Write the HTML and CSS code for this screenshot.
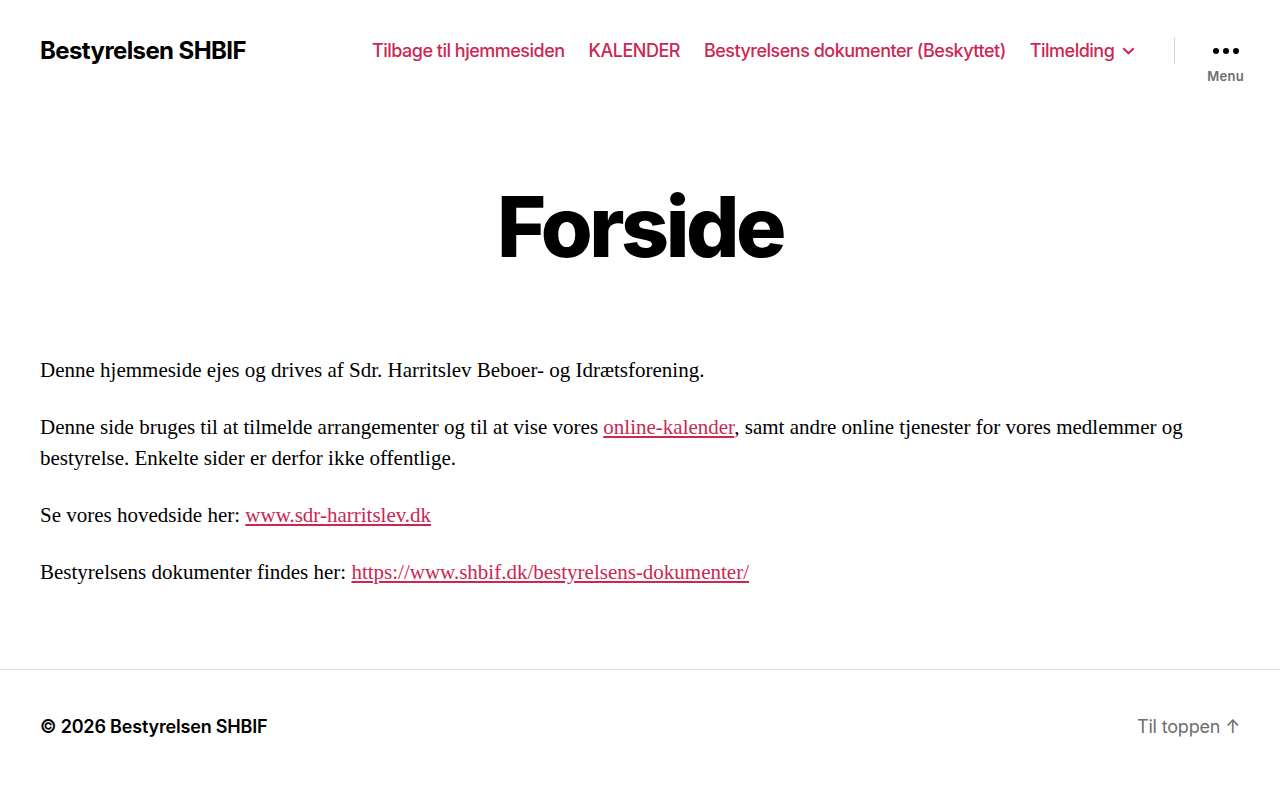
FILE: index.html
```html
<!DOCTYPE html>
<html lang="da">
<head>
  <meta charset="UTF-8" />
  <meta name="viewport" content="width=device-width, initial-scale=1.0" />
  <title>Forside – Bestyrelsen SHBIF</title>
  <link rel="stylesheet" href="styles.css">
</head>
<body>
  <header class="site-header">
    <a class="site-title" href="#">Bestyrelsen SHBIF</a>

    <div class="header-right">
      <nav class="primary-menu">
        <a href="#">Tilbage til hjemmesiden</a>
        <a href="#">KALENDER</a>
        <a href="#">Bestyrelsens dokumenter (Beskyttet)</a>
        <a href="#" class="has-sub">Tilmelding
          <svg class="chevron" width="13" height="8" viewBox="0 0 13 8" aria-hidden="true">
            <polyline points="1.2,1.2 6.5,6.3 11.8,1.2" fill="none" stroke="currentColor" stroke-width="2" />
          </svg>
        </a>
      </nav>

      <div class="separator"></div>

      <button class="menu-toggle" type="button">
        <span class="dots"><i></i><i></i><i></i></span>
        <span class="toggle-text">Menu</span>
      </button>
    </div>
  </header>

  <main class="site-main">
    <h1 class="entry-title">Forside</h1>

    <div class="entry-content">
      <p>Denne hjemmeside ejes og drives af Sdr. Harritslev Beboer- og Idrætsforening.</p>
      <p>Denne side bruges til at tilmelde arrangementer og til at vise vores <a href="#">online-kalender</a>, samt andre online tjenester for vores medlemmer og bestyrelse. Enkelte sider er derfor ikke offentlige.</p>
      <p>Se vores hovedside her: <a href="#">www.sdr-harritslev.dk</a></p>
      <p>Bestyrelsens dokumenter findes her: <a href="#">https://www.shbif.dk/bestyrelsens-dokumenter/</a></p>
    </div>
  </main>

  <footer class="site-footer">
    <p class="copyright">© 2026 <a href="#">Bestyrelsen SHBIF</a></p>
    <a class="to-the-top" href="#">Til toppen <span class="arrow">↑</span></a>
  </footer>
</body>
</html>
```

FILE: styles.css
```css
body {
  margin: 0;
  padding: 0;
  background: #fff;
  color: #000;
  font-family: Inter, "Noto Sans", sans-serif;
}

a {
  color: #cd2653;
}

.site-header {
  display: flex;
  align-items: center;
  justify-content: space-between;
  height: 100px;
  padding: 0 40px;
}

.site-title {
  color: #000;
  text-decoration: none;
  font-size: 24px;
  font-weight: 700;
  letter-spacing: -0.025em;
}

.header-right {
  display: flex;
  align-items: center;
}

.primary-menu {
  display: flex;
  align-items: center;
  gap: 24px;
}

.primary-menu a {
  color: #cd2653;
  text-decoration: none;
  font-size: 18px;
  font-weight: 500;
  letter-spacing: -0.0277em;
  display: flex;
  align-items: center;
}

.chevron {
  margin-left: 8px;
  margin-top: 2px;
}

.separator {
  width: 1px;
  height: 27px;
  background: #dcd7ca;
  margin: 0 32px 0 39px;
}

.menu-toggle {
  border: none;
  background: none;
  padding: 0;
  display: flex;
  flex-direction: column;
  align-items: center;
  margin-top: 32px;
  margin-right: -4px;
  font-family: inherit;
  cursor: pointer;
}

.dots {
  display: flex;
  gap: 4px;
  height: 7px;
  margin-bottom: 13px;
}

.dots i {
  width: 6px;
  height: 6px;
  border-radius: 50%;
  background: #000;
}

.toggle-text {
  font-size: 13px;
  font-weight: 600;
  color: #6d6d6d;
  letter-spacing: 0.02em;
}

.site-main {
  padding: 0 40px;
}

.entry-title {
  margin: 79px 0 80px;
  text-align: center;
  font-size: 84px;
  font-weight: 800;
  line-height: 1.138;
  letter-spacing: -0.0415625em;
}

.entry-content {
  max-width: 1200px;
  font-family: "Liberation Serif", "Times New Roman", serif;
  font-size: 21px;
  line-height: 31px;
}

.entry-content p {
  margin: 0 0 26px;
}

.entry-content p:last-child {
  margin-bottom: 0;
}

.site-footer {
  margin-top: 81px;
  border-top: 1px solid #dedfdf;
  display: flex;
  align-items: center;
  justify-content: space-between;
  padding: 46px 40px 58px;
  font-size: 18px;
}

.copyright {
  margin: 0;
  font-weight: 600;
  letter-spacing: -0.01em;
}

.copyright a {
  color: #000;
  text-decoration: none;
}

.to-the-top {
  color: #6d6d6d;
  text-decoration: none;
  letter-spacing: -0.01em;
}
```
